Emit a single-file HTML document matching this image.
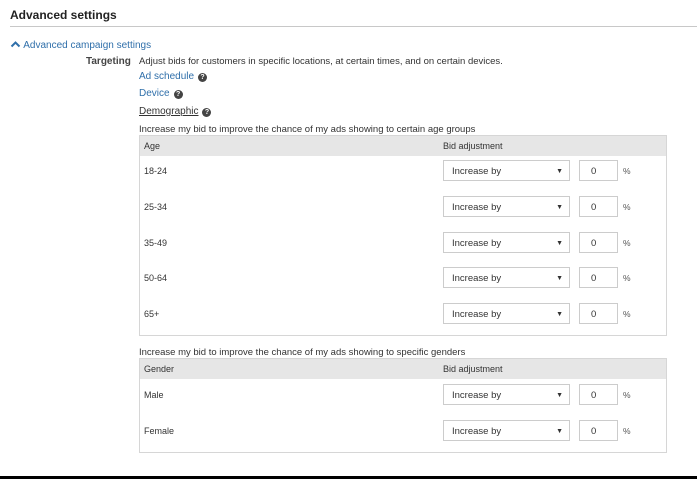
<!DOCTYPE html><html><head><style>
body{margin:0;width:697px;height:479px;position:relative;background:#fff;font-family:"Liberation Sans",Arial,sans-serif;font-size:9.5px;color:#333;overflow:hidden}
.a{position:absolute;white-space:nowrap}
.l{color:#2f6faa}
.q{display:inline-block;width:9px;height:9px;border-radius:50%;background:#444;color:#fff;font-size:7px;font-weight:bold;text-align:center;line-height:9px;vertical-align:0px;margin-left:4px}
.t{position:absolute;left:139px;width:526px;border:1px solid #d6d6d6;background:#fff}
.s{position:absolute;left:443px;width:125px;height:19px;border:1px solid #ccc;font-size:9.5px;line-height:21px}
.s span{position:absolute;left:8px}
.s i{position:absolute;right:6px;font-style:normal;font-size:7px}
.n{position:absolute;left:579px;width:37px;height:19px;border:1px solid #ccc;font-size:9.5px;line-height:21px}
.n span{position:absolute;left:11px}
.p{position:absolute;left:623px;font-size:8.5px;color:#555}
.rl{position:absolute;left:144px;font-size:9px}
</style></head><body>
<div class="a" style="left:10px;top:8px;font-weight:bold;font-size:12px;color:#222">Advanced settings</div>
<div class="a" style="left:10px;top:26px;width:687px;height:1px;background:#c8c8c8"></div>
<div class="a l" style="left:10px;top:40px;font-size:10px"><svg width="11" height="8" style="vertical-align:0px"><path d="M1.5 6.5L5.5 2.5L9.5 6.5" stroke="#2f6faa" stroke-width="2" fill="none"/></svg> Advanced campaign settings</div>
<div class="a" style="left:86px;top:56px;font-weight:bold;color:#444;font-size:10px">Targeting</div>
<div class="a" style="left:139px;top:56px">Adjust bids for customers in specific locations, at certain times, and on certain devices.</div>
<div class="a l" style="left:139px;top:71px;font-size:10px">Ad schedule<span class="q">?</span></div>
<div class="a l" style="left:139px;top:88px;font-size:10px">Device<span class="q">?</span></div>
<div class="a" style="left:139px;top:106px;color:#333;font-size:10px"><u>Demographic</u><span class="q">?</span></div>
<div class="a" style="left:139px;top:124px;font-size:9.5px">Increase my bid to improve the chance of my ads showing to certain age groups</div>
<div class="t" style="top:135px;height:199px"></div>
<div class="a" style="left:140px;top:136px;width:526px;height:20px;background:#e6e6e6"></div>
<div class="rl a" style="top:141px">Age</div>
<div class="a" style="left:443px;top:141px;font-size:9px">Bid adjustment</div>

<div class="rl a" style="top:166px">18-24</div><div class="s" style="top:160px"><span>Increase by</span><i>▼</i></div><div class="n" style="top:160px"><span>0</span></div><div class="p a" style="top:166px">%</div>
<div class="rl a" style="top:202px">25-34</div><div class="s" style="top:196px"><span>Increase by</span><i>▼</i></div><div class="n" style="top:196px"><span>0</span></div><div class="p a" style="top:202px">%</div>
<div class="rl a" style="top:238px">35-49</div><div class="s" style="top:232px"><span>Increase by</span><i>▼</i></div><div class="n" style="top:232px"><span>0</span></div><div class="p a" style="top:238px">%</div>
<div class="rl a" style="top:273px">50-64</div><div class="s" style="top:267px"><span>Increase by</span><i>▼</i></div><div class="n" style="top:267px"><span>0</span></div><div class="p a" style="top:273px">%</div>
<div class="rl a" style="top:309px">65+</div><div class="s" style="top:303px"><span>Increase by</span><i>▼</i></div><div class="n" style="top:303px"><span>0</span></div><div class="p a" style="top:309px">%</div>

<div class="a" style="left:139px;top:347px;font-size:9.5px">Increase my bid to improve the chance of my ads showing to specific genders</div>
<div class="t" style="top:358px;height:93px"></div>
<div class="a" style="left:140px;top:359px;width:526px;height:20px;background:#e6e6e6"></div>
<div class="rl a" style="top:364px">Gender</div>
<div class="a" style="left:443px;top:364px;font-size:9px">Bid adjustment</div>
<div class="rl a" style="top:390px">Male</div><div class="s" style="top:384px"><span>Increase by</span><i>▼</i></div><div class="n" style="top:384px"><span>0</span></div><div class="p a" style="top:390px">%</div>
<div class="rl a" style="top:426px">Female</div><div class="s" style="top:420px"><span>Increase by</span><i>▼</i></div><div class="n" style="top:420px"><span>0</span></div><div class="p a" style="top:426px">%</div>
<div class="a" style="left:0;top:476px;width:697px;height:3px;background:#000"></div>
</body></html>
